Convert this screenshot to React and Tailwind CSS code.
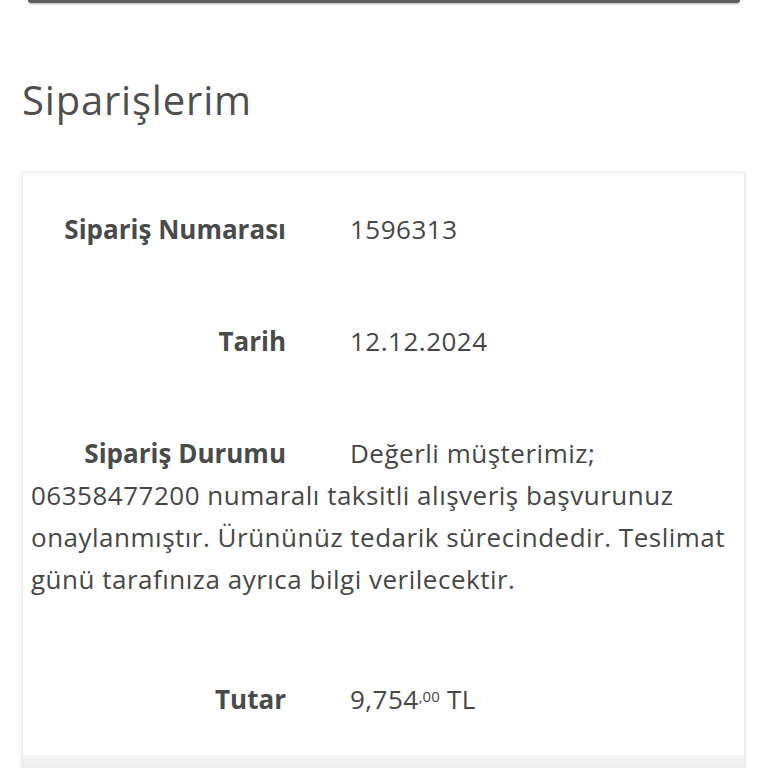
import React from "react";

const Row = ({ label, children, className = "" }) => (
    <div className={`px-[8px] py-[35px] text-[26px] leading-[42px] ${className}`}>
        <span className="inline-block w-[255px] text-right font-bold text-[#4a4a4a]">{label}</span>
        <span className="ml-[64px] tracking-[0.5px] text-[#474747]">{children}</span>
    </div>
);

const App = () => {
    return (
        <div className="h-[768px] overflow-hidden bg-white font-['Open_Sans',sans-serif]">
            <div className="mx-[28px] h-[3px] rounded-b-[3px] bg-[#5f5f5f] shadow-[0_1px_2px_rgba(0,0,0,0.3)]" />

            <h1 className="ml-[22px] mt-[70px] text-[40px] leading-[54px] tracking-[0.8px] text-[#4f4f4f]">Siparişlerim</h1>

            <div className="mx-[22px] mt-[45px] w-[723px] border border-[#ececec] bg-white shadow-[0_1px_4px_rgba(0,0,0,0.12)]">
                <Row label="Sipariş Numarası">1596313</Row>
                <Row label="Tarih">12.12.2024</Row>
                <Row label="Sipariş Durumu" className="pb-[43px]">
                    Değerli müşterimiz; 06358477200 numaralı taksitli alışveriş başvurunuz onaylanmıştır. Ürününüz tedarik sürecindedir. Teslimat günü tarafınıza ayrıca bilgi verilecektir.
                </Row>
                <Row label="Tutar">
                    9,754<sup className="text-[15px] tracking-normal">,00</sup> TL
                </Row>
                <div className="h-[20px] bg-gradient-to-b from-[#f4f4f4] to-[#ececec]" />
            </div>
        </div>
    );
};

export default App;
